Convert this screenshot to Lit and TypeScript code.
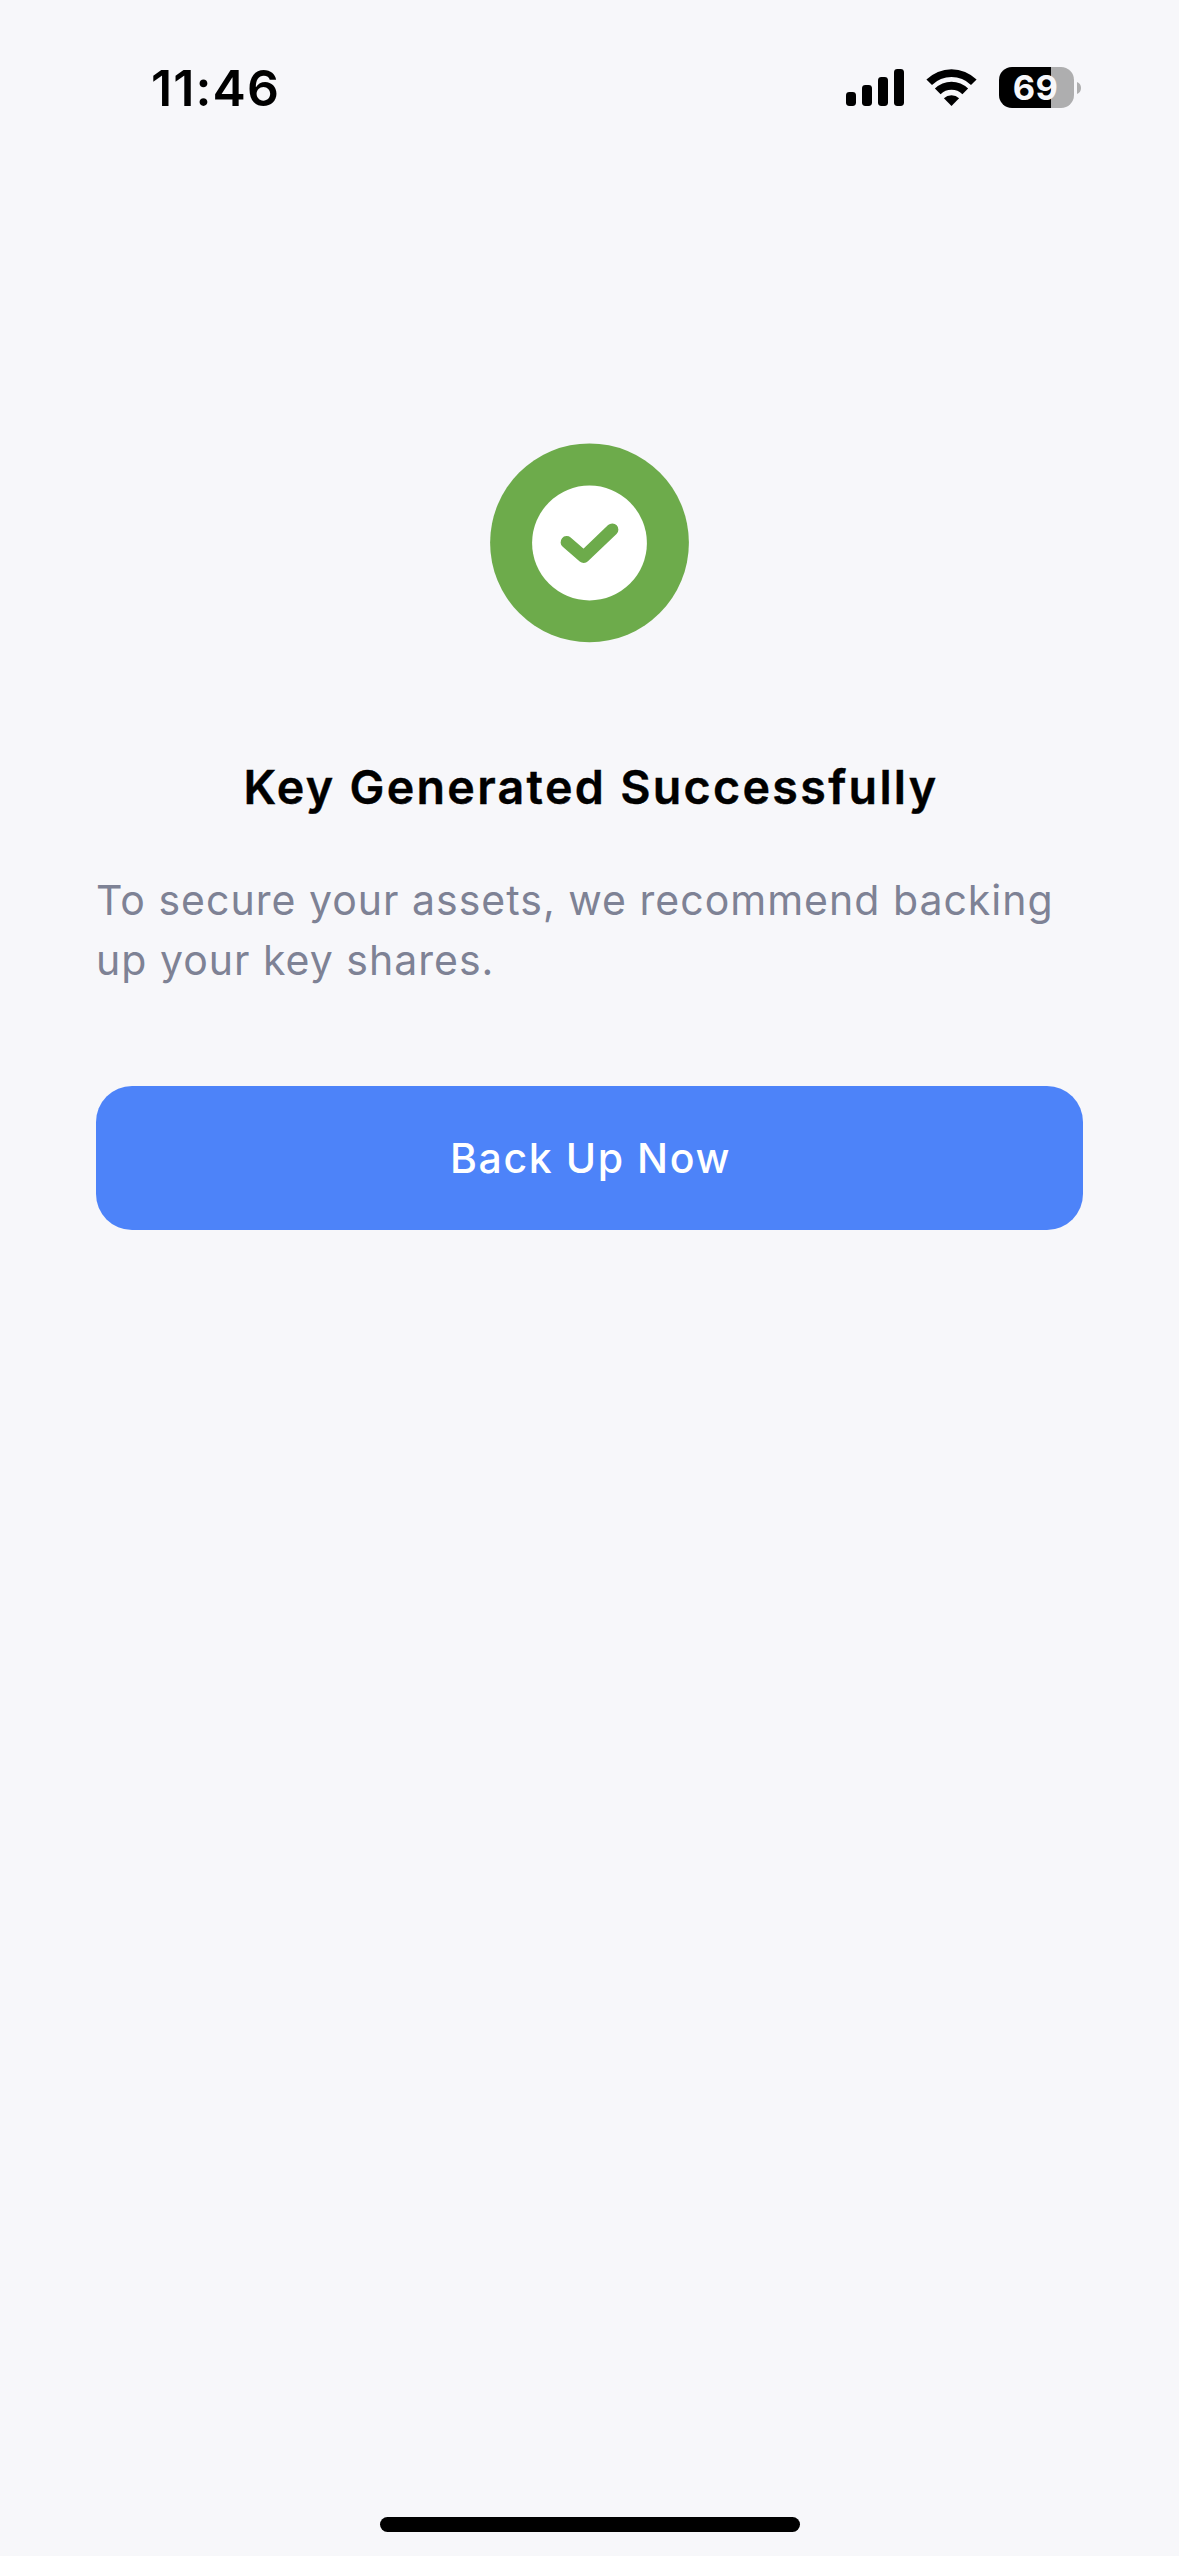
import { LitElement, html, css, svg } from "lit";
import { customElement, property } from "lit/decorators.js";

@customElement("status-bar")
class StatusBar extends LitElement {
  @property() time = "11:46";
  @property({ type: Number }) battery = 69;

  static styles = css`
    :host {
      display: flex;
      justify-content: space-between;
      align-items: flex-start;
      height: 177px;
      box-sizing: border-box;
      padding: 67px 98px 0 151px;
      color: #000;
    }
    .time {
      font-size: 50px;
      line-height: 42px;
      font-weight: 600;
      letter-spacing: 1.1px;
    }
    .icons {
      display: flex;
      align-items: flex-start;
    }
    .signal { margin-right: 22px; }
    .wifi { margin-right: 22px; }
    svg { display: block; }
    .battery {
      display: flex;
      align-items: center;
      gap: 3px;
    }
    .cell {
      display: flex;
      align-items: center;
      justify-content: center;
      box-sizing: border-box;
      width: 75px;
      height: 41px;
      padding-right: 2px;
      border-radius: 13px;
      color: #f7f7fa;
      font-size: 34.5px;
      line-height: 41px;
      font-weight: 700;
      letter-spacing: 0.3px;
    }
  `;

  render() {
    const fill = `linear-gradient(to right, #000 ${this.battery + 0.3}%, #aeaeaf ${this.battery + 0.3}%)`;
    const bars = [
      [0, 14],
      [16, 21],
      [32, 29],
      [48, 37],
    ];
    return html`
      <div class="time">${this.time}</div>
      <div class="icons">
        <svg class="signal" width="58" height="41" viewBox="0 0 58 41">
          ${bars.map(([x, h]) => svg`<rect x=${x} y=${39 - h} width="10" height=${h} rx="3.4" />`)}
        </svg>
        <svg class="wifi" width="51" height="41" viewBox="926 67 51 41">
          <path d="M926.4 79.6A35.5 35.5 0 0 1 976.6 79.6L971 84.9A28 28 0 0 0 932 84.9Z" />
          <path d="M934.9 88.6A23.5 23.5 0 0 1 968.1 88.6L962.4 94.2A15.6 15.6 0 0 0 940.6 94.2Z" />
          <path d="M943.9 98.3A11 11 0 0 1 959.1 98.3L951.5 106Z" />
        </svg>
        <div class="battery">
          <div class="cell" style="background:${fill}">${this.battery}</div>
          <svg width="4" height="12" viewBox="0 0 4 12">
            <path d="M0 0C2.6 1 4 3.3 4 6S2.6 11 0 12Z" fill="#aeaeaf" />
          </svg>
        </div>
      </div>
    `;
  }
}

@customElement("success-badge")
class SuccessBadge extends LitElement {
  static styles = css`
    :host { display: block; }
    svg { display: block; }
  `;

  render() {
    return html`
      <svg width="199" height="200" viewBox="0.5 0 199 200">
        <circle cx="100" cy="99.8" r="99.4" fill="#6dab4b" />
        <circle cx="100" cy="100" r="57.4" fill="#fff" />
        <path
          d="M77.2 99.2L94.2 113.8L122.8 86.5"
          fill="none"
          stroke="#6dab4b"
          stroke-width="12.2"
          stroke-linecap="round"
          stroke-linejoin="round"
        />
      </svg>
    `;
  }
}

@customElement("app-root")
class AppRoot extends LitElement {
  static styles = css`
    :host {
      display: flex;
      flex-direction: column;
      width: 1179px;
      height: 2556px;
      background: #f7f7fa;
      font-family: Inter, "Liberation Sans", sans-serif;
      font-feature-settings: "calt" 0;
    }
    .content {
      flex: 1;
      display: flex;
      flex-direction: column;
      align-items: center;
      padding: 266px 96px 0;
    }
    .title {
      margin: 114px 0 0;
      padding-left: 3px;
      font-size: 46.6px;
      line-height: 60px;
      font-weight: 600;
      letter-spacing: 2.3px;
      color: #000;
      -webkit-text-stroke: 0.4px #000;
      white-space: nowrap;
    }
    .note {
      align-self: stretch;
      margin: 53px 0 0;
      font-size: 41px;
      line-height: 60px;
      font-weight: 400;
      letter-spacing: 1.01px;
      color: #7e8295;
    }
    .action {
      align-self: stretch;
      height: 144px;
      margin: 96px 0 0;
      padding: 0 0 0 2px;
      border: 0;
      border-radius: 36px;
      background: #4d83f9;
      color: #fff;
      font: inherit;
      font-size: 41px;
      font-weight: 500;
      letter-spacing: 1.6px;
    }
    .home {
      align-self: center;
      width: 420px;
      height: 15px;
      margin-bottom: 24px;
      border-radius: 8px;
      background: #000;
    }
  `;

  render() {
    return html`
      <status-bar></status-bar>
      <main class="content">
        <success-badge></success-badge>
        <h1 class="title">Key Generated Successfully</h1>
        <p class="note">
          To secure your assets, we recommend backing<br />up your key shares.
        </p>
        <button class="action">Back Up Now</button>
      </main>
      <div class="home"></div>
    `;
  }
}
